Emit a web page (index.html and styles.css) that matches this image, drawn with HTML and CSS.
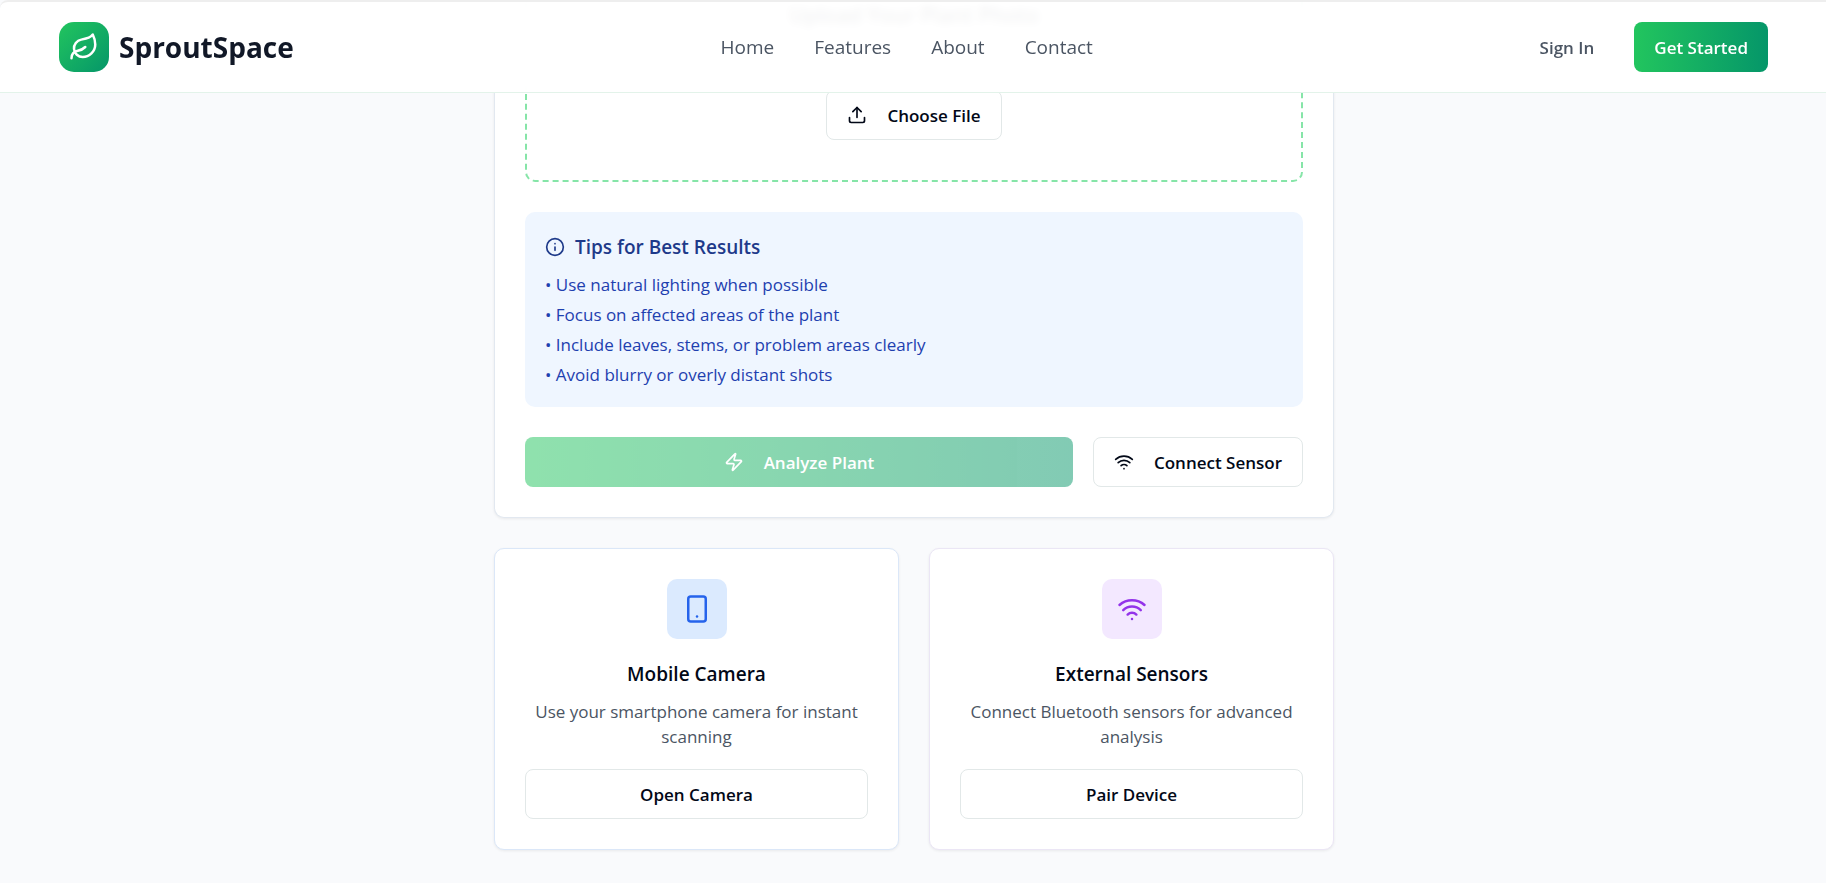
FILE: index.html
```html
<!DOCTYPE html>
<html lang="en">
<head>
<meta charset="utf-8">
<title>SproutSpace</title>
<link rel="stylesheet" href="styles.css">
</head>
<body>
<header class="topbar">
  <a class="brand" href="#">
    <span class="brand-mark">
      <svg class="icon icon-lg" viewBox="0 0 24 24"><path d="M11 20A7 7 0 0 1 9.800 6.100C15.500 5 17 4.480 19 2c1 2 2 4.180 2 8 0 5.500-4.780 10-10 10Z"/><path d="M2 21c0-3 1.850-5.360 5.080-6C9.500 14.520 12 13 13 12"/></svg>
    </span>
    <span class="brand-name">SproutSpace</span>
  </a>
  <nav class="nav">
    <a href="#">Home</a>
    <a href="#">Features</a>
    <a href="#">About</a>
    <a href="#">Contact</a>
  </nav>
  <div class="account">
    <button class="btn btn-ghost" type="button">Sign In</button>
    <button class="btn btn-primary" type="button">Get Started</button>
  </div>
</header>
<main class="page">
  <section class="card upload">
    <div class="dropzone">
      <h2 class="drop-title">Upload Your Plant Photo</h2>
      <button class="btn btn-outline" type="button">
        <svg class="icon" viewBox="0 0 24 24"><path d="M21 15v4a2 2 0 0 1-2 2H5a2 2 0 0 1-2-2v-4"/><path d="m17 8-5-5-5 5"/><path d="M12 3v12"/></svg>
        Choose File
      </button>
    </div>
    <div class="tips">
      <h3 class="tips-title">
        <svg class="icon" viewBox="0 0 24 24"><circle cx="12" cy="12" r="10"/><path d="M12 16v-4"/><path d="M12 8h.01"/></svg>
        Tips for Best Results
      </h3>
      <ul class="tips-list">
        <li>• Use natural lighting when possible</li>
        <li>• Focus on affected areas of the plant</li>
        <li>• Include leaves, stems, or problem areas clearly</li>
        <li>• Avoid blurry or overly distant shots</li>
      </ul>
    </div>
    <div class="actions">
      <button class="btn btn-primary btn-analyze" type="button" disabled>
        <svg class="icon" viewBox="0 0 24 24"><path d="M4 14a1 1 0 0 1-.780-1.630l9.900-10.200a.5.5 0 0 1 .860.460l-1.920 6.020A1 1 0 0 0 13 10h7a1 1 0 0 1 .780 1.630l-9.900 10.200a.5.5 0 0 1-.860-.460l1.920-6.020A1 1 0 0 0 11 14z"/></svg>
        Analyze Plant
      </button>
      <button class="btn btn-outline" type="button">
        <svg class="icon" viewBox="0 0 24 24"><path d="M12 20h.01"/><path d="M2 8.820a15 15 0 0 1 20 0"/><path d="M5 12.859a10 10 0 0 1 14 0"/><path d="M8.500 16.429a5 5 0 0 1 7 0"/></svg>
        Connect Sensor
      </button>
    </div>
  </section>
  <div class="options">
    <section class="card option option-blue">
      <span class="tile">
        <svg class="icon icon-lg" viewBox="0 0 24 24"><rect x="5" y="2" width="14" height="20" rx="2"/><path d="M12 18h.01"/></svg>
      </span>
      <h3 class="option-title">Mobile Camera</h3>
      <p class="option-text">Use your smartphone camera for instant scanning</p>
      <button class="btn btn-outline" type="button">Open Camera</button>
    </section>
    <section class="card option option-purple">
      <span class="tile">
        <svg class="icon icon-lg" viewBox="0 0 24 24"><path d="M12 20h.01"/><path d="M2 8.820a15 15 0 0 1 20 0"/><path d="M5 12.859a10 10 0 0 1 14 0"/><path d="M8.500 16.429a5 5 0 0 1 7 0"/></svg>
      </span>
      <h3 class="option-title">External Sensors</h3>
      <p class="option-text">Connect Bluetooth sensors for advanced analysis</p>
      <button class="btn btn-outline" type="button">Pair Device</button>
    </section>
  </div>
</main>
</body>
</html>
```
FILE: styles.css
```css
* { box-sizing: border-box; }
body {
  margin: 0;
  padding-left: 2px;
  background: #f9fafc;
  color: #020817;
  font: 17px/25px "Open Sans", "Noto Sans", sans-serif;
}
h2, h3, p, ul { margin: 0; padding: 0; }
a { color: inherit; text-decoration: none; }

.icon {
  width: 20px;
  height: 20px;
  flex: none;
  fill: none;
  stroke: currentColor;
  stroke-width: 2;
  stroke-linecap: round;
  stroke-linejoin: round;
}
.icon-lg { width: 30px; height: 30px; }

.topbar {
  position: fixed;
  inset: 0 0 auto;
  z-index: 10;
  display: flex;
  justify-content: space-between;
  align-items: center;
  padding: 20px 58px 20px 59px;
  background: rgba(255, 255, 255, 0.95);
  backdrop-filter: blur(4px);
  border-top: 2px solid #eeeeee;
  border-bottom: 1px solid #e3f3ea;
  border-top-left-radius: 8px;
}
.brand { display: flex; align-items: center; gap: 10px; }
.brand-mark {
  display: grid;
  place-items: center;
  width: 50px;
  height: 50px;
  border-radius: 15px;
  color: #fff;
  background: linear-gradient(135deg, #22c55e, #059669);
}
.brand-name { color: #111827; font-size: 28px; line-height: 40px; font-weight: 700; }
.nav { display: flex; gap: 40px; color: #4b5563; font-size: 19px; }
.account { display: flex; gap: 20px; }

.btn {
  display: flex;
  align-items: center;
  justify-content: center;
  gap: 20px;
  height: 50px;
  padding: 0 20px;
  border: 0;
  border-radius: 8px;
  font: inherit;
  font-weight: 600;
  color: #020817;
  background: none;
  white-space: nowrap;
}
.btn-outline { border: 1px solid #e2e8e8; background: #fff; }
.btn-ghost { color: #4b5563; }
.btn-primary { color: #fff; background: linear-gradient(90deg, #22c55e, #059669); }
.btn-primary:disabled { opacity: 0.5; }
.btn-analyze { flex: 1; }

.page { width: 840px; max-width: 100%; margin: 0 auto; padding-bottom: 33px; }
.card {
  background: #fff;
  border: 1px solid #e2e8f0;
  border-radius: 10px;
  box-shadow: 0 1px 3px rgba(0, 0, 0, 0.07);
}
.upload {
  display: grid;
  gap: 30px;
  padding: 0 30px 30px;
  border-top: 0;
  border-radius: 0 0 10px 10px;
}
.dropzone {
  display: flex;
  flex-direction: column;
  align-items: center;
  gap: 60px;
  padding-bottom: 40px;
  border: 2px dashed #86e5a8;
  border-top: 0;
  border-radius: 0 0 10px 10px;
}
.drop-title { font-size: 21px; line-height: 30px; font-weight: 600; }

.tips { padding: 20px; border-radius: 10px; background: #eff6ff; }
.tips-title {
  display: flex;
  align-items: center;
  gap: 10px;
  margin-bottom: 10px;
  color: #1e3a8a;
  font-size: 19px;
  line-height: 30px;
  font-weight: 600;
}
.tips-list { display: grid; gap: 5px; list-style: none; color: #1e40af; }
.actions { display: flex; gap: 20px; }

.options { display: grid; grid-template-columns: 1fr 1fr; gap: 30px; margin-top: 30px; }
.option { display: flex; flex-direction: column; align-items: center; padding: 30px; text-align: center; }
.option .btn { width: 100%; }
.option-blue { border-color: #dbe7f8; }
.option-purple { border-color: #ebe6f5; }
.tile { display: grid; place-items: center; width: 60px; height: 60px; border-radius: 10px; }
.option-blue .tile { color: #2563eb; background: #dbeafe; }
.option-purple .tile { color: #9333ea; background: #f3e8ff; }
.option-title { margin: 20px 0 10px; font-size: 19px; line-height: 30px; font-weight: 600; }
.option-text { margin-bottom: 20px; color: #4b5563; }
```
